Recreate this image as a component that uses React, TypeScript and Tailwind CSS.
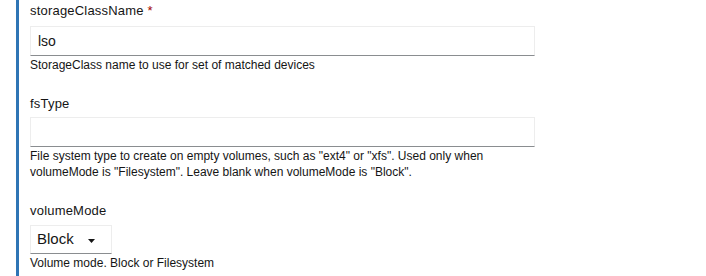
import React from "react";

const font = { fontFamily: '"Liberation Sans", Arial, sans-serif' };

export default function App() {
  return (
    <div className="w-[706px] h-[276px] bg-white overflow-hidden" style={font}>
      <div className="ml-[16px] h-[276px] border-l-[3px] border-[#2f75b5] pl-[11px]">
        <div className="w-[505px]">
          <div className="pt-[3px] pb-[7px] text-[13px] leading-[16px] text-[#151515] font-medium tracking-[0.2px]">
            storageClassName <span className="text-[#a30000]">*</span>
          </div>
          <div className="h-[30px] border border-[#ededed] border-b-[#8a8d90] pl-[7px] flex items-center text-[14px] text-[#151515]">
            lso
          </div>
          <div className="pt-[1px] text-[12px] leading-[16px] text-[#151515]">
            StorageClass name to use for set of matched devices
          </div>

          <div className="pt-[23px] pb-[5px] text-[13px] leading-[16px] text-[#151515] font-medium tracking-[0.2px]">
            fsType
          </div>
          <div className="h-[30px] border border-[#ededed] border-b-[#8a8d90]" />
          <div className="pt-[1px] text-[12px] leading-[16px] text-[#151515] w-[470px]">
            File system type to create on empty volumes, such as "ext4" or "xfs". Used only when volumeMode is "Filesystem". Leave blank when volumeMode is "Block".
          </div>

          <div className="pt-[23px] pb-[6px] text-[13px] leading-[16px] text-[#151515] font-medium tracking-[0.2px]">
            volumeMode
          </div>
          <div className="w-[82px] h-[29px] border border-[#ededed] border-b-[#8a8d90] pl-[6px] pr-[16px] flex items-center justify-between text-[15px] text-[#151515]">
            <span>Block</span>
            <svg width="7" height="4" viewBox="0 0 7 4" className="mt-[2px]">
              <path d="M0 0 L7 0 L3.5 4 Z" fill="#151515" />
            </svg>
          </div>
          <div className="pt-[1px] text-[12px] leading-[16px] text-[#151515]">
            Volume mode. Block or Filesystem
          </div>
        </div>
      </div>
    </div>
  );
}
